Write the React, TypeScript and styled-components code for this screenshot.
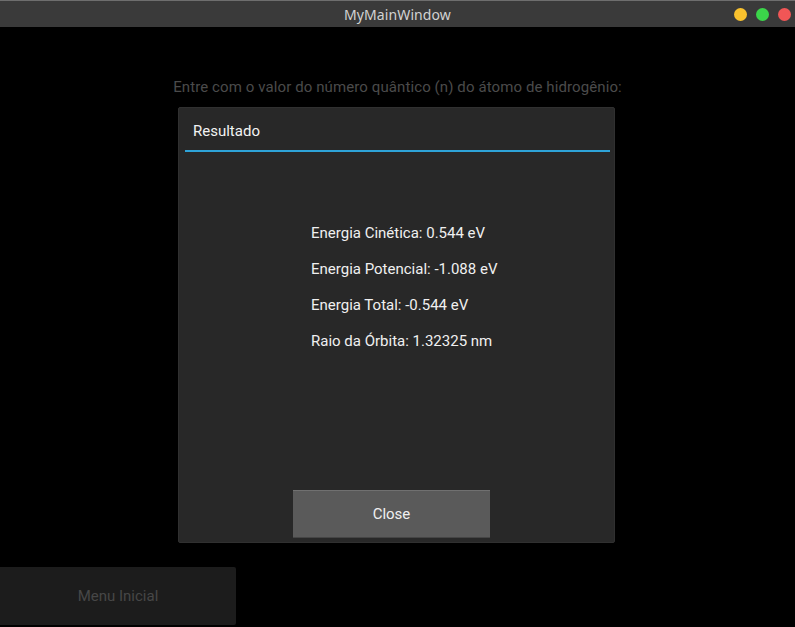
import React from "react";
import styled, { createGlobalStyle } from "styled-components";

const GlobalStyle = createGlobalStyle`
  html, body { margin: 0; padding: 0; background: #000; }
  body { overflow: hidden; }
`;

const Window = styled.div`
  width: 795px;
  height: 627px;
  display: flex;
  flex-direction: column;
  background: #000;
  font-family: Roboto, "Liberation Sans", sans-serif;
`;

const TitleBar = styled.div`
  height: 27px;
  flex: none;
  box-sizing: border-box;
  border-top: 1px solid #6e6e6e;
  background: #3a3a3a;
  display: grid;
  grid-template-columns: 1fr auto 1fr;
  align-items: center;
`;

const Title = styled.div`
  grid-column: 2;
  font-family: "Noto Sans", "DejaVu Sans", sans-serif;
  font-size: 14px;
  color: #d2d2d2;
  letter-spacing: 0.1px;
`;

const Lights = styled.div`
  grid-column: 3;
  justify-self: end;
  display: flex;
  gap: 9px;
  padding-right: 4px;
`;

const Light = styled.span<{ $c: string }>`
  width: 13px;
  height: 13px;
  border-radius: 50%;
  background: ${(p) => p.$c};
`;

const Main = styled.div`
  flex: 1;
  position: relative;
  display: flex;
  flex-direction: column;
  align-items: center;
`;

const Prompt = styled.div`
  margin-top: 51px;
  font-size: 15px;
  line-height: 18px;
  letter-spacing: 0.1px;
  color: #4b4b4b;
`;

const MenuButton = styled.div`
  align-self: flex-start;
  margin-top: auto;
  margin-bottom: 2px;
  width: 236px;
  height: 58px;
  background: #1c1c1c;
  border-radius: 0 2px 2px 0;
  display: flex;
  align-items: center;
  justify-content: center;
  color: #474747;
  font-size: 15px;
`;

const Popup = styled.div`
  position: absolute;
  left: 178px;
  top: 80px;
  width: 437px;
  height: 436px;
  box-sizing: border-box;
  background: #282828;
  border: 1px solid #303030;
  border-radius: 2px;
  display: flex;
  flex-direction: column;
  padding: 0 4px 4px 6px;
`;

const PopupTitle = styled.div`
  height: 42px;
  display: flex;
  align-items: center;
  padding-left: 8px;
  padding-top: 3px;
  box-sizing: border-box;
  color: #f2f2f2;
  font-size: 15px;
`;

const Divider = styled.div`
  height: 2px;
  background: #2ea3d8;
`;

const Body = styled.div`
  flex: 1;
  display: flex;
  flex-direction: column;
  gap: 18px;
  padding-top: 72px;
  padding-left: 126px;
`;

const Line = styled.div`
  font-size: 15px;
  line-height: 18px;
  color: #f0f0f0;
`;

const CloseButton = styled.div`
  align-self: flex-start;
  margin-left: 108px;
  width: 197px;
  height: 48px;
  box-sizing: border-box;
  background: #5a5a5a;
  border-top: 1px solid #707070;
  border-bottom: 1px solid #454545;
  display: flex;
  align-items: center;
  justify-content: center;
  color: #f0f0f0;
  font-size: 15px;
`;

export default function App() {
  return (
    <>
      <GlobalStyle />
      <Window>
        <TitleBar>
          <Title>MyMainWindow</Title>
          <Lights>
            <Light $c="#f9c22e" />
            <Light $c="#3bd64a" />
            <Light $c="#f15656" />
          </Lights>
        </TitleBar>
        <Main>
          <Prompt>Entre com o valor do número quântico (n) do átomo de hidrogênio:</Prompt>
          <MenuButton>Menu Inicial</MenuButton>
          <Popup>
            <PopupTitle>Resultado</PopupTitle>
            <Divider />
            <Body>
              <Line>Energia Cinética: 0.544 eV</Line>
              <Line>Energia Potencial: -1.088 eV</Line>
              <Line>Energia Total: -0.544 eV</Line>
              <Line>Raio da Órbita: 1.32325 nm</Line>
            </Body>
            <CloseButton>Close</CloseButton>
          </Popup>
        </Main>
      </Window>
    </>
  );
}
